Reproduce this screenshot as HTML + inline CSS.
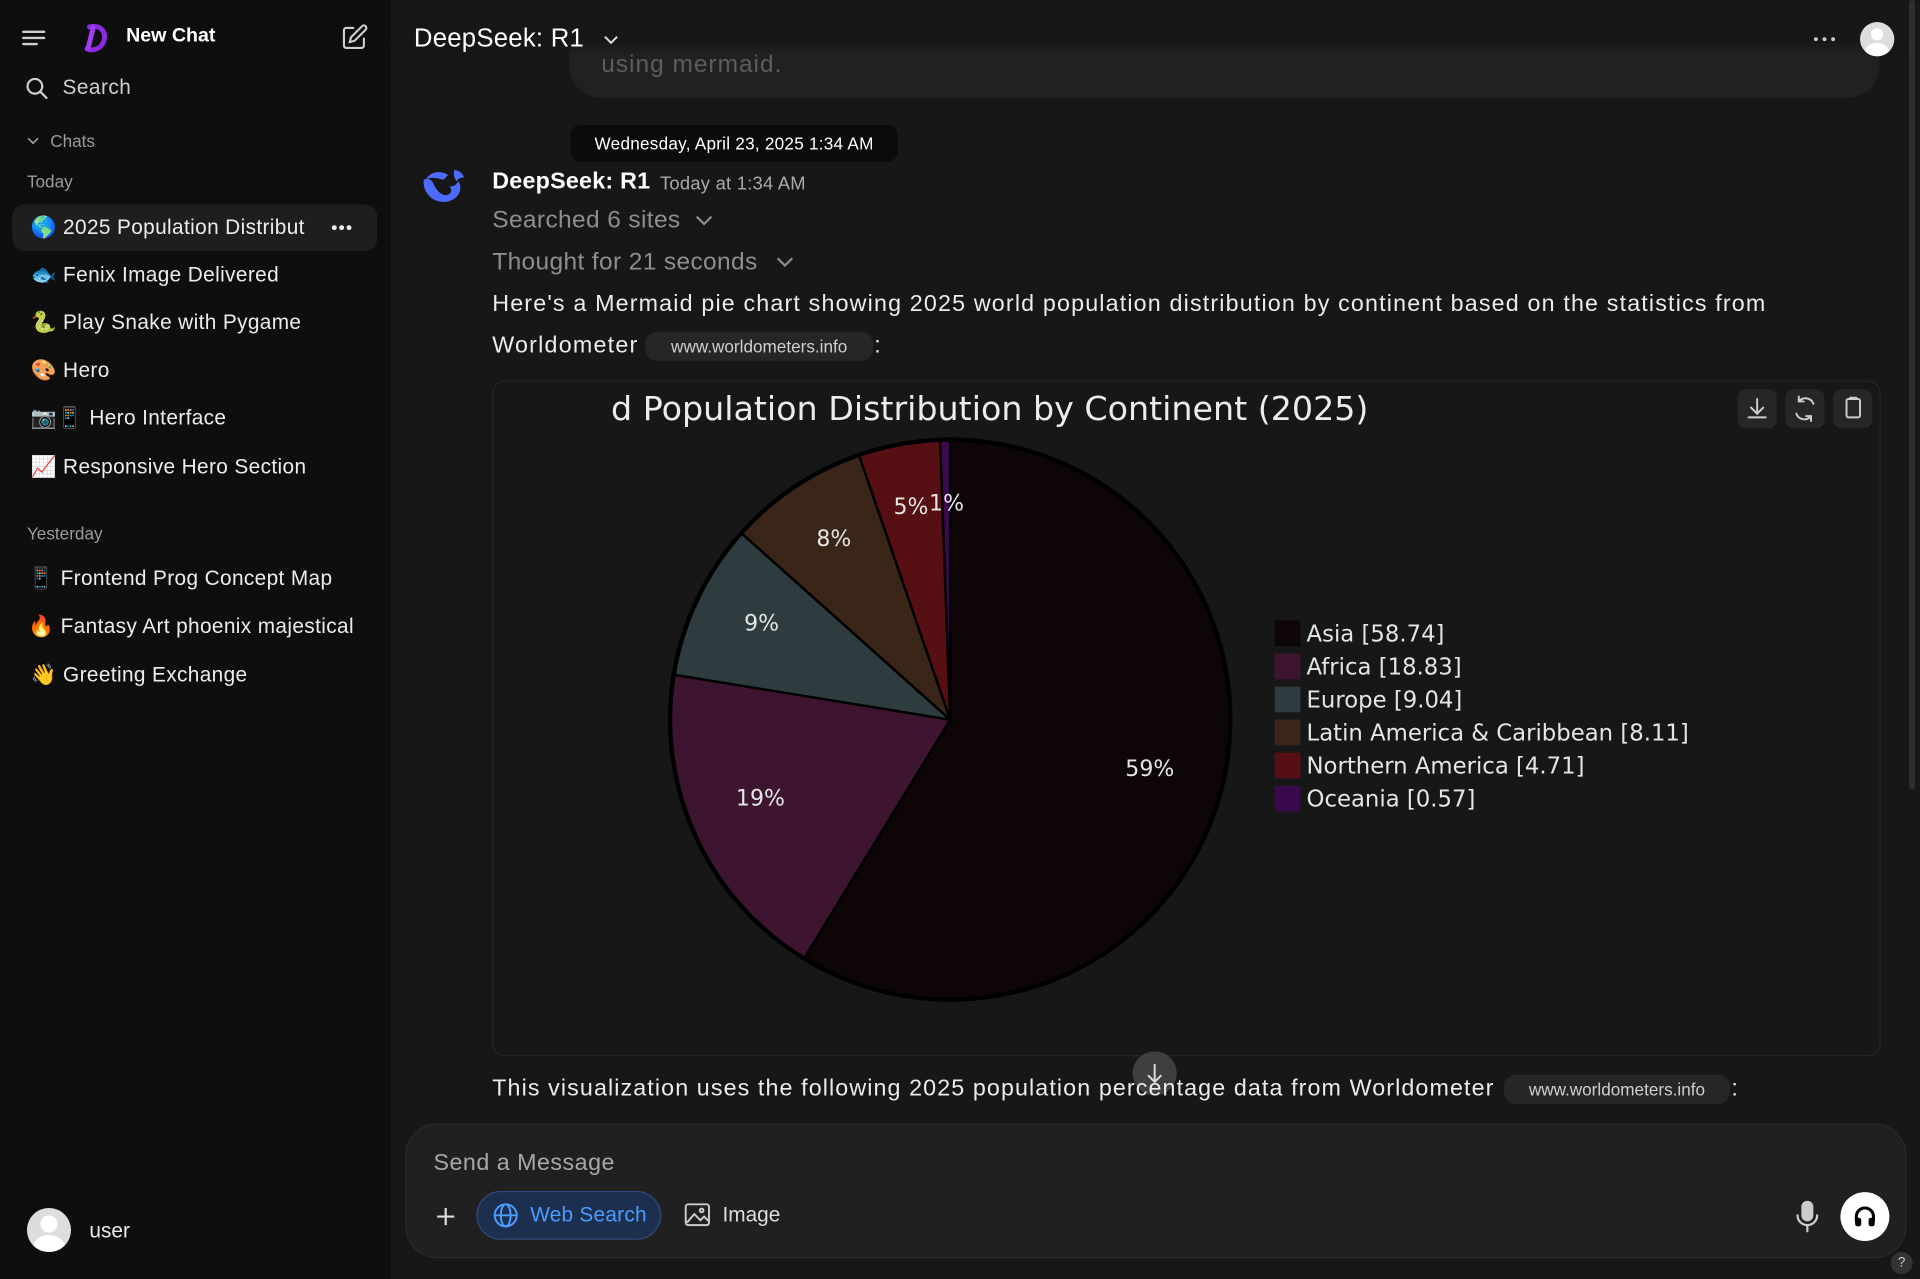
<!DOCTYPE html>
<html><head><meta charset="utf-8"><style>
html,body{margin:0;padding:0;width:1920px;height:1279px;overflow:hidden;background:#171717;}
#w{position:absolute;left:0;top:0;width:1568px;height:1045px;transform:scale(1.22449,1.2239);transform-origin:0 0;font-family:"Liberation Sans","Noto Sans CJK SC",sans-serif;color:#ececec;}
.a{position:absolute;white-space:nowrap;}
#sb{position:absolute;left:0;top:0;width:319px;height:1045px;background:#0e0e0e;}
.it{position:absolute;left:25px;font-size:17px;color:#ececec;line-height:20px;letter-spacing:0.3px}
.g{color:#9b9b9b}
.chip{position:absolute;background:#262626;border-radius:10px;font-size:14px;color:#cfcfcf;text-align:center;line-height:24px;}
.p{font-size:19px;letter-spacing:1px;color:#ececec}
</style></head><body><div id="w">
<div id="sb">
 <svg class="a" style="left:17px;top:22px" width="22" height="18" viewBox="0 0 22 18"><path d="M2 4h17M2 9h17M2 14h11" stroke="#cfcfcf" stroke-width="2" stroke-linecap="round"/></svg>
 <svg class="a" style="left:64px;top:18px" width="26" height="26" viewBox="0 0 26 26"><path d="M9 4c8-2 14 3 12 11-2 7-9 9-14 7" stroke="#8a2be2" stroke-width="4" fill="none" stroke-linecap="round"/><path d="M12 5L8 21" stroke="#a23cf5" stroke-width="4" stroke-linecap="round"/></svg>
 <div class="a" style="left:103px;top:21px;font-size:16px;font-weight:bold;color:#fff">New Chat</div>
 <svg class="a" style="left:278px;top:19px" width="23" height="23" viewBox="0 0 24 24" fill="none" stroke="#cfcfcf" stroke-width="1.8" stroke-linecap="round"><path d="M11 4H5a2 2 0 0 0-2 2v13a2 2 0 0 0 2 2h13a2 2 0 0 0 2-2v-6"/><path d="M18.5 2.5a2.1 2.1 0 0 1 3 3L12 15l-4 1 1-4z"/></svg>
 <svg class="a" style="left:20px;top:62px" width="20" height="20" viewBox="0 0 20 20" fill="none" stroke="#cfcfcf" stroke-width="1.8"><circle cx="8.5" cy="8.5" r="6"/><path d="M13 13l5 5" stroke-linecap="round"/></svg>
 <div class="a" style="left:51px;top:62px;font-size:17px;color:#cfcfcf;letter-spacing:0.4px">Search</div>
 <svg class="a" style="left:21px;top:110px" width="12" height="10" viewBox="0 0 12 10"><path d="M2 3l4 4 4-4" stroke="#9b9b9b" stroke-width="1.4" fill="none"/></svg>
 <div class="a g" style="left:41px;top:107px;font-size:14px">Chats</div>
 <div class="a g" style="left:22px;top:140px;font-size:14px">Today</div>
 <div class="a" style="left:10px;top:167px;width:298px;height:38px;background:#1e1e1e;border-radius:10px"></div>
 <div class="it" style="top:176px">🌎 2025 Population Distribut</div>
 <svg class="a" style="left:270px;top:182px" width="18" height="8"><circle cx="3" cy="4" r="2" fill="#eee"/><circle cx="9" cy="4" r="2" fill="#eee"/><circle cx="15" cy="4" r="2" fill="#eee"/></svg>
 <div class="it" style="top:215px">🐟 Fenix Image Delivered</div>
 <div class="it" style="top:254px">🐍 Play Snake with Pygame</div>
 <div class="it" style="top:293px">🎨 Hero</div>
 <div class="it" style="top:332px">📷📱 Hero Interface</div>
 <div class="it" style="top:372px">📈 Responsive Hero Section</div>
 <div class="a g" style="left:22px;top:428px;font-size:14px">Yesterday</div>
 <div class="it" style="top:463px;left:23px">📱 Frontend Prog Concept Map</div>
 <div class="it" style="top:502px;left:23px">🔥 Fantasy Art phoenix majestical</div>
 <div class="it" style="top:542px">👋 Greeting Exchange</div>
 <div class="a" style="left:22px;top:987px;width:36px;height:36px;border-radius:50%;background:#ddd;overflow:hidden"><div style="position:absolute;left:11px;top:6px;width:14px;height:14px;border-radius:50%;background:#fff"></div><div style="position:absolute;left:5px;top:22px;width:26px;height:20px;border-radius:50%;background:#fff"></div></div>
 <div class="a" style="left:73px;top:996px;font-size:17px">user</div>
</div>
<!-- main -->
<div class="a" style="left:465px;top:20px;width:1070px;height:60px;background:#212121;border-radius:0 0 26px 26px"></div>
<div class="a" style="left:491px;top:42px;font-size:20px;color:#5d5d5d;letter-spacing:0.8px">using mermaid.</div>
<div class="a" style="left:319px;top:0;width:1240px;height:46px;background:linear-gradient(#171717 72%,rgba(23,23,23,0))"></div>
<div class="a" style="left:338px;top:20px;font-size:21px;color:#fff;letter-spacing:0.2px">DeepSeek: R1</div>
<svg class="a" style="left:492px;top:27px" width="14" height="10"><path d="M2 3l5 5 5-5" stroke="#ddd" stroke-width="1.6" fill="none"/></svg>
<svg class="a" style="left:1480px;top:28px" width="20" height="8"><circle cx="3" cy="4" r="1.6" fill="#ccc"/><circle cx="10" cy="4" r="1.6" fill="#ccc"/><circle cx="17" cy="4" r="1.6" fill="#ccc"/></svg>
<div class="a" style="left:1519px;top:18px;width:28px;height:28px;border-radius:50%;background:#ddd;overflow:hidden"><div style="position:absolute;left:9px;top:5px;width:10px;height:10px;border-radius:50%;background:#fff"></div><div style="position:absolute;left:4px;top:17px;width:20px;height:16px;border-radius:50%;background:#fff"></div></div>
<div class="a" style="left:1559px;top:0;width:5px;height:645px;background:#2e2e2e;border-radius:3px"></div>
<div class="a" style="left:466px;top:102px;width:267px;height:30px;background:#0b0b0b;border-radius:8px;font-size:14px;color:#fff;line-height:30px;text-align:center;letter-spacing:0.2px">Wednesday, April 23, 2025 1:34 AM</div>
<svg class="a" style="left:344px;top:137px" width="38" height="32" viewBox="0 0 38 32"><path d="M2 10c-1 9 6 18 16 18 8 0 14-5 14-12 0-2-1-4-2-5-1 3-4 5-7 4 2 2 2 6-1 7-5 2-10-4-12-9C8 9 5 8 2 10z" fill="#4d6bfe"/><path d="M4 9c4-6 12-7 18-3l-4 4C13 8 8 8 4 9z" fill="#4d6bfe"/><path d="M27 2c4 0 7 3 8 6-3 0-5 1-6 3-2-2-3-6-2-9z" fill="#4d6bfe"/><circle cx="13" cy="15" r="1.5" fill="#171717"/></svg>
<div class="a" style="left:402px;top:138px;font-size:19px;font-weight:bold;color:#fff;letter-spacing:0.2px">DeepSeek: R1</div>
<div class="a" style="left:539px;top:142px;font-size:15px;color:#aaa;letter-spacing:0.2px">Today at 1:34 AM</div>
<div class="a" style="left:402px;top:169px;color:#8e8e8e;font-size:20px;letter-spacing:0.3px">Searched 6 sites</div>
<svg class="a" style="left:567px;top:174px" width="16" height="12"><path d="M2 3l6 6 6-6" stroke="#8e8e8e" stroke-width="1.8" fill="none"/></svg>
<div class="a" style="left:402px;top:203px;color:#8e8e8e;font-size:20px;letter-spacing:0.3px">Thought for 21 seconds</div>
<svg class="a" style="left:633px;top:208px" width="16" height="12"><path d="M2 3l6 6 6-6" stroke="#8e8e8e" stroke-width="1.8" fill="none"/></svg>
<div class="a p" style="left:402px;top:238px;letter-spacing:0.95px">Here's a Mermaid pie chart showing 2025 world population distribution by continent based on the statistics from</div>
<div class="a p" style="left:402px;top:272px">Worldometer</div>
<div class="chip" style="left:527px;top:271px;width:186px">www.worldometers.info</div>
<div class="a p" style="left:714px;top:272px">:</div>
<div class="a" style="left:402px;top:311px;width:1132px;height:550px;border:1px solid #262626;border-radius:10px;overflow:hidden">
<svg width="1133" height="551" viewBox="402 311 1133 551" style="position:absolute;left:0;top:0;font-family:'DejaVu Sans',sans-serif">
<g stroke="#000" stroke-width="2">
<path d="M775 587L775 359A228 228 0 1 1 656 781.5Z" fill="#0e0507"/>
<path d="M775 587L656 781.5A228 228 0 0 1 550 550.4Z" fill="#3e1530"/>
<path d="M775 587L550 550.4A228 228 0 0 1 605 435Z" fill="#2e3b3f"/>
<path d="M775 587L605 435A228 228 0 0 1 700.7 371.4Z" fill="#3a2619"/>
<path d="M775 587L700.7 371.4A228 228 0 0 1 766.8 359.1Z" fill="#560f12"/>
<path d="M775 587L766.8 359.1A228 228 0 0 1 775 359Z" fill="#3a0a4c"/>
</g>
<circle cx="775" cy="587" r="229" fill="none" stroke="#000" stroke-width="3"/>
<g fill="#e5e5e5" font-size="18" text-anchor="middle">
<text x="938" y="633">59%</text><text x="620" y="657">19%</text><text x="621" y="514">9%</text><text x="680" y="445">8%</text><text x="743" y="419">5%</text><text x="772" y="416">1%</text>
</g>
<text x="498" y="342" fill="#ececec" font-size="27.2">d Population Distribution by Continent (2025)</text>
<g font-size="18.6" fill="#e5e5e5">
<rect x="1040" y="506" width="21" height="21" fill="#0e0507"/><text x="1066" y="523">Asia [58.74]</text>
<rect x="1040" y="533" width="21" height="21" fill="#3e1530"/><text x="1066" y="550">Africa [18.83]</text>
<rect x="1040" y="560" width="21" height="21" fill="#2e3b3f"/><text x="1066" y="577">Europe [9.04]</text>
<rect x="1040" y="587" width="21" height="21" fill="#3a2619"/><text x="1066" y="604">Latin America &amp; Caribbean [8.11]</text>
<rect x="1040" y="614" width="21" height="21" fill="#560f12"/><text x="1066" y="631">Northern America [4.71]</text>
<rect x="1040" y="641" width="21" height="21" fill="#3a0a4c"/><text x="1066" y="658">Oceania [0.57]</text>
</g>
<g fill="#262626"><rect x="1418" y="317" width="32" height="32" rx="7"/><rect x="1457" y="317" width="32" height="32" rx="7"/><rect x="1496" y="317" width="32" height="32" rx="7"/></g>
<g fill="none" stroke="#ccc" stroke-width="1.6" stroke-linecap="round">
<path d="M1434 325v12M1429 332l5 5 5-5M1427 340h14"/>
<path d="M1480 329a7 7 0 0 0-12-2M1466 337a7 7 0 0 0 12 2M1468 323v4h4M1478 343v-4h-4"/>
<rect x="1507" y="325" width="11" height="15" rx="1.5"/><path d="M1510 324h5"/>
</g>
</svg></div>
<div class="a" style="left:925px;top:859px;width:36px;height:36px;border-radius:50%;background:rgba(70,70,70,0.85)"></div>
<svg class="a" style="left:933px;top:867px" width="20" height="20" viewBox="0 0 20 20" fill="none" stroke="#ddd" stroke-width="1.6" stroke-linecap="round"><path d="M10 3v14M5 12l5 5 5-5"/></svg>
<div class="a p" style="left:402px;top:879px;letter-spacing:0.9px">This visualization uses the following 2025 population percentage data from Worldometer</div>
<div class="chip" style="left:1228px;top:878px;width:185px">www.worldometers.info</div>
<div class="a p" style="left:1414px;top:879px">:</div>
<div class="a" style="left:331px;top:918px;width:1224px;height:108px;background:#202020;border:1px solid #2a2a2a;border-radius:26px"></div>
<div class="a" style="left:354px;top:940px;font-size:19px;color:#a8a8a8;letter-spacing:0.4px">Send a Message</div>
<svg class="a" style="left:355px;top:985px" width="18" height="18"><path d="M9 2v14M2 9h14" stroke="#ddd" stroke-width="1.8"/></svg>
<div class="a" style="left:389px;top:973px;width:149px;height:38px;background:#1d2f4f;border:1px solid #2d4b7e;border-radius:20px"></div>
<svg class="a" style="left:402px;top:982px" width="22" height="22" viewBox="0 0 22 22" fill="none" stroke="#4a9dff" stroke-width="1.6"><circle cx="11" cy="11" r="9"/><ellipse cx="11" cy="11" rx="4" ry="9"/><path d="M2 11h18"/></svg>
<div class="a" style="left:433px;top:983px;font-size:17px;color:#4a9dff;letter-spacing:0.2px">Web Search</div>
<svg class="a" style="left:559px;top:983px" width="21" height="19" viewBox="0 0 21 19" fill="none" stroke="#ccc" stroke-width="1.6"><rect x="1" y="1" width="19" height="17" rx="2"/><path d="M2 16l6-7 5 5 3-3 4 4"/><circle cx="14" cy="6" r="1.5"/></svg>
<div class="a" style="left:590px;top:983px;font-size:17px;color:#ddd">Image</div>
<svg class="a" style="left:1466px;top:981px" width="20" height="26" viewBox="0 0 20 26" fill="none" stroke="#ccc" stroke-width="1.8" stroke-linecap="round"><rect x="6" y="1" width="8" height="15" rx="4" fill="#ccc"/><path d="M2 12a8 8 0 0 0 16 0M10 20v5"/></svg>
<div class="a" style="left:1503px;top:974px;width:40px;height:40px;border-radius:50%;background:#fff"></div>
<svg class="a" style="left:1512px;top:983px" width="22" height="22" viewBox="0 0 22 22"><path d="M4 15v-4a7 7 0 0 1 14 0v4" fill="none" stroke="#000" stroke-width="2.5"/><rect x="3" y="12" width="5" height="7" rx="2" fill="#000"/><rect x="14" y="12" width="5" height="7" rx="2" fill="#000"/></svg>
<div class="a" style="left:1544px;top:1023px;width:18px;height:18px;border-radius:50%;background:#333;font-size:11px;color:#ccc;text-align:center;line-height:18px">?</div>
</div></body></html>
